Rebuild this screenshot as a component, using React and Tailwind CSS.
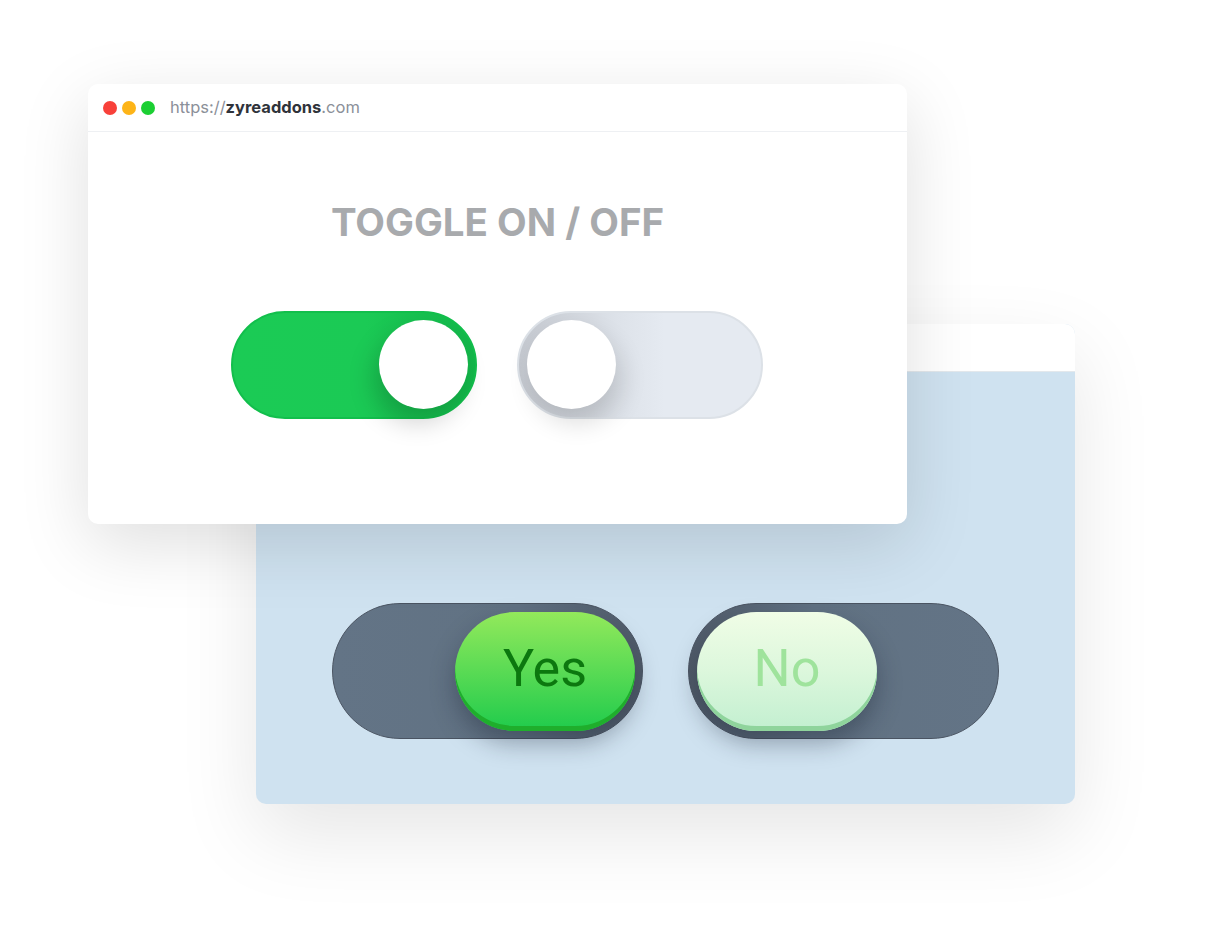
import React from 'react';

const BackWindow = () => {
  return (
    <div className="absolute left-[256px] top-[324px] w-[819px] h-[480px] rounded-[10px] overflow-hidden bg-[#cfe2f0] shadow-[0_30px_80px_rgba(0,0,0,0.10)] flex flex-col">
      <div className="h-[48px] bg-white border-b border-[#e3e8ec]" />
      <div className="flex-1 flex items-start pt-[231px] pl-[76px] gap-[45px]">
        {/* yes pill */}
        <div className="w-[311px] h-[136px] rounded-full border border-[#4a5462] bg-[linear-gradient(to_right,#637486_0%,#617283_60%,#505b69_100%)] flex items-center justify-end pr-[7px]">
          <div className="w-[180px] h-[119px] rounded-full bg-[linear-gradient(to_bottom,#93e95b_0%,#5fdc55_45%,#1fcb4c_100%)] shadow-[inset_0_-5px_0_#1fae2c,0_12px_24px_rgba(20,30,45,0.35)] flex items-center justify-center pb-[4px]">
            <span className="font-['Roboto',sans-serif] text-[52px] leading-none text-[#0c780f]">Yes</span>
          </div>
        </div>
        {/* no pill */}
        <div className="w-[311px] h-[136px] rounded-full border border-[#4a5462] bg-[linear-gradient(to_right,#505b69_0%,#617283_40%,#637486_100%)] flex items-center pl-[8px]">
          <div className="w-[180px] h-[119px] rounded-full bg-[linear-gradient(to_bottom,#f0fde6_0%,#dcf7dc_50%,#c2efd0_100%)] shadow-[inset_0_-5px_0_#8fd49c,0_12px_24px_rgba(20,30,45,0.35)] flex items-center justify-center pb-[4px]">
            <span className="font-['Roboto',sans-serif] text-[52px] leading-none text-[#9fe39c]">No</span>
          </div>
        </div>
      </div>
    </div>
  );
};

const FrontWindow = () => {
  return (
    <div className="absolute left-[88px] top-[84px] w-[819px] h-[440px] rounded-[10px] bg-white shadow-[0_20px_70px_rgba(0,0,0,0.13)] flex flex-col">
      <div className="h-[48px] border-b border-[#eef0f3] flex items-center pl-[15px]">
        <div className="flex gap-[5px]">
          <span className="w-[14px] h-[14px] rounded-full bg-[#f8413a]" />
          <span className="w-[14px] h-[14px] rounded-full bg-[#fdb418]" />
          <span className="w-[14px] h-[14px] rounded-full bg-[#1ccf33]" />
        </div>
        <div className="ml-[15px] font-['Inter',sans-serif] text-[16.5px] text-[#8b9099]">
          https://<span className="font-bold text-[#2f333a]">zyreaddons</span>.com
        </div>
      </div>
      <div className="flex-1 flex flex-col items-center pt-[71px]">
        <h1 className="font-['Inter',sans-serif] font-bold text-[38.5px] leading-none text-[#a8aaad]">
          TOGGLE ON / OFF
        </h1>
        <div className="flex gap-[40px] mt-[69px] pr-[2px]">
          {/* on */}
          <div className="w-[246px] h-[108px] rounded-full border-2 border-[#12bf4c] bg-[linear-gradient(to_right,#1bcb55_0%,#1bca55_55%,#13b74a_100%)] flex items-center justify-end pr-[7px]">
            <div className="w-[89px] h-[89px] rounded-full bg-white shadow-[-6px_14px_26px_rgba(0,0,0,0.18)]" />
          </div>
          {/* off */}
          <div className="w-[246px] h-[108px] rounded-full border-2 border-[#dce1e7] bg-[linear-gradient(to_right,#c4c8cf_0%,#dde2e9_40%,#e5eaf1_60%,#e5eaf1_100%)] flex items-center pl-[8px]">
            <div className="w-[89px] h-[89px] rounded-full bg-white shadow-[6px_14px_26px_rgba(0,0,0,0.14)]" />
          </div>
        </div>
      </div>
    </div>
  );
};

export default function App() {
  return (
    <div className="relative w-[1205px] h-[937px] bg-white overflow-hidden">
      <BackWindow />
      <FrontWindow />
    </div>
  );
}
